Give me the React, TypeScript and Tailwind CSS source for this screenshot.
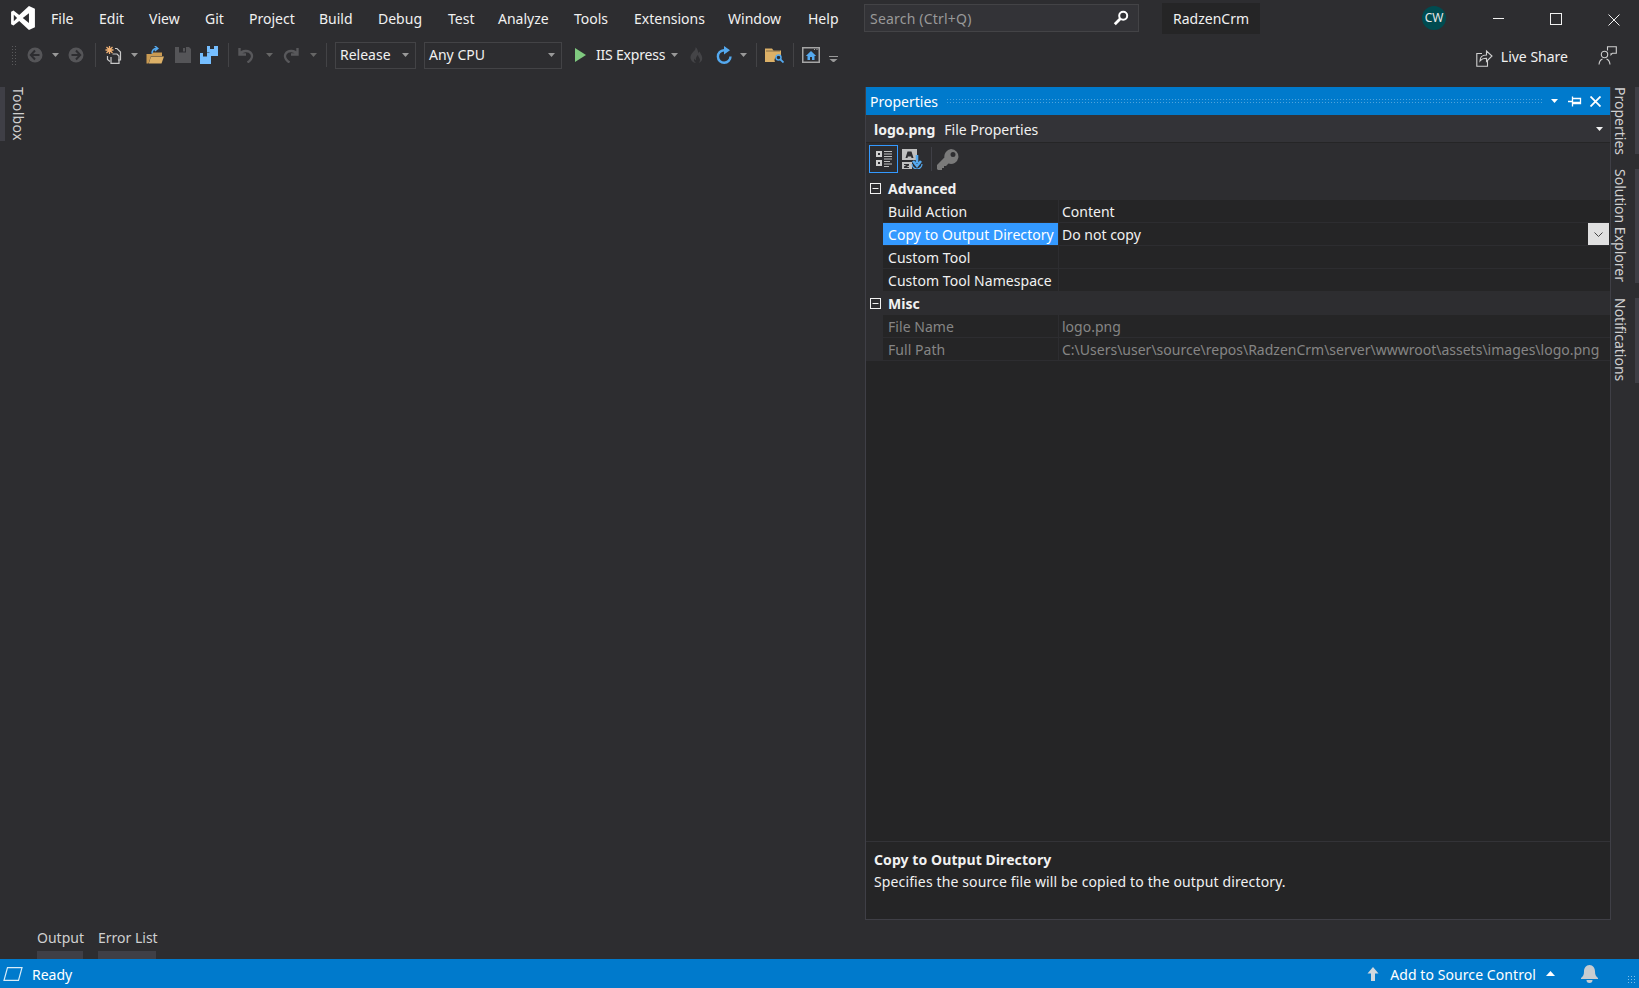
import { ReactNode } from "react";

const MENU = [
  ["File", "w-[48px]"],
  ["Edit", "w-[50px]"],
  ["View", "w-[56px]"],
  ["Git", "w-[44px]"],
  ["Project", "w-[70px]"],
  ["Build", "w-[59px]"],
  ["Debug", "w-[70px]"],
  ["Test", "w-[50px]"],
  ["Analyze", "w-[76px]"],
  ["Tools", "w-[60px]"],
  ["Extensions", "w-[94px]"],
  ["Window", "w-[80px]"],
  ["Help", "w-[41px]"],
];

function Caret({ className = "", color = "#999" }: { className?: string; color?: string }) {
  return (
    <svg width="7" height="4" viewBox="0 0 7 4" className={className}>
      <path d="M0 0h7L3.500 4z" fill={color} />
    </svg>
  );
}

function Sep({ className = "" }: { className?: string }) {
  return <div className={`h-6 w-px bg-[#434346] ${className}`} />;
}

function VsLogo() {
  return (
    <svg width="26" height="26" viewBox="0 0 24 24" className="ml-[10px] shrink-0">
      <path
        fillRule="evenodd"
        fill="#fff"
        d="M17.500 1 23 3.500v17L17.500 23l-9-8.200L3.200 19 1 17.800V6.200L3.200 5l5.300 4.200zm0 6.500L11.800 12l5.700 4.500zM3.500 9v6l3-3z"
      />
    </svg>
  );
}

function CircleArrow({ dir }: { dir: "l" | "r" }) {
  return (
    <svg width="16" height="16" viewBox="0 0 16 16">
      <circle cx="8" cy="8" r="7.500" fill="#555558" />
      <path
        d={dir === "l" ? "M8 3.500 3.800 8 8 12.500M4 8h8.500" : "M8 3.500 12.200 8 8 12.500M12 8H3.500"}
        stroke="#2d2d30"
        strokeWidth="2"
        fill="none"
      />
    </svg>
  );
}

function NewProject() {
  return (
    <svg width="18" height="18" viewBox="0 0 18 18">
      <path d="M10 2.500h2l3.500 3.500v8H13" fill="none" stroke="#c8c8c8" strokeWidth="1.200" />
      <path d="M7.500 8h4.500l2 2v7.400H6V11" fill="none" stroke="#c8c8c8" strokeWidth="1.200" />
      <path d="M2.500 10v3.500l2.500 2" fill="none" stroke="#c8c8c8" strokeWidth="1.200" />
      <path d="M4.500 0v8M.5 4h8M1.500 1l6 6M7.500 1l-6 6" stroke="#f0b072" strokeWidth="1.300" />
    </svg>
  );
}

function OpenFolder() {
  return (
    <svg width="18" height="18" viewBox="0 0 18 18">
      <path d="M.5 8h5l1-1.500h9.500V10H5l-2.500 7.500H.5z" fill="#c99a52" />
      <path d="M2.800 17.500 5 10.500h13L15.500 17.500z" fill="#dcb067" />
      <path d="M6 7.500c0-3 2-5 5-5M8.800 0l3 2.500-3 2.500" fill="none" stroke="#54a9ef" strokeWidth="1.500" />
    </svg>
  );
}

function Floppy() {
  return (
    <svg width="16" height="16" viewBox="0 0 16 16">
      <path d="M0 0h14l2 2v14H0z" fill="#555558" />
      <path d="M4 0h7v5.500H4z" fill="#2d2d30" />
      <path d="M8 1h2v3.500H8z" fill="#555558" />
    </svg>
  );
}

function SaveAll() {
  return (
    <svg width="18" height="18" viewBox="0 0 18 18">
      <path d="M7 0h11v10H9.500V6.500H7z" fill="#75beff" />
      <path d="M10 0h4v3h-4z" fill="#2d2d30" />
      <path d="M0 7h11v11H0z" fill="#75beff" />
      <path d="M3 7h4v3.500H3z" fill="#2d2d30" />
    </svg>
  );
}

function UndoIcon({ flip }: { flip?: boolean }) {
  return (
    <svg width="16" height="16" viewBox="0 0 16 16" className={flip ? "-scale-x-100" : ""}>
      <path
        d="M1.500 1v6.500H8M2 7c2-3.500 9-4.500 11.500 0 1.500 3-.8 6.500-4 8.500"
        fill="none"
        stroke="#58585b"
        strokeWidth="2.400"
      />
    </svg>
  );
}

function Flame() {
  return (
    <svg width="13" height="16" viewBox="0 0 13 16">
      <path
        d="M5.500 0c.6 2.500-1.500 4-3 5.800C.7 8-.5 10.500 1.500 13.500 2.500 15 4 16 6 16c-1.500-1-2.500-2.500-1.800-4.500.4 1 1 1.600 1.800 1.800-.5-2 .4-4 2-5.300 0 2 2 3 2 5 0 1.400-.7 2.300-1.500 3 2.500-.5 4-2.700 3.700-5.300C12 7.500 10 6.500 9.500 4.500 8.800 5 8.500 6 8.500 6.500 8 4 7.500 1.500 5.500 0z"
        fill="#444447"
      />
    </svg>
  );
}

function Refresh() {
  return (
    <svg width="17" height="18" viewBox="0 0 17 18">
      <path d="M8 4.200A6.300 6.300 0 1 0 14.500 10.500" fill="none" stroke="#54a9ef" strokeWidth="2.400" />
      <path d="M8 0v8.400l6-4.200z" fill="#54a9ef" />
    </svg>
  );
}

function FolderSearch() {
  return (
    <svg width="19" height="16" viewBox="0 0 19 16">
      <path d="M0 1.500h7l1.500 2H16V9a4.500 4.500 0 0 0-6 6H0z" fill="#dcb067" />
      <path d="M1 4h14" stroke="#2d2d30" strokeWidth="1" opacity=".5" />
      <circle cx="13.500" cy="10.500" r="2.500" fill="none" stroke="#54a9ef" strokeWidth="1.500" />
      <path d="m15.500 12.500 3 3" stroke="#54a9ef" strokeWidth="1.800" />
    </svg>
  );
}

function HomeWindow() {
  return (
    <svg width="18" height="16" viewBox="0 0 18 16">
      <rect x=".75" y=".75" width="16.500" height="14.500" fill="none" stroke="#a5a5a5" strokeWidth="1.500" />
      <path d="M12 2.500h1M14.500 2.500h1" stroke="#a5a5a5" strokeWidth="1" />
      <path d="M9 4 3.800 9H5.500v4h2.500v-3h2v3h2.500V9h1.700z" fill="#54a9ef" />
    </svg>
  );
}

function Magnifier() {
  return (
    <svg width="16" height="16" viewBox="0 0 16 16">
      <circle cx="10.200" cy="5.800" r="4" fill="none" stroke="#fff" strokeWidth="2" />
      <path d="M7.500 8.500 1.800 14.200" stroke="#fff" strokeWidth="2.800" />
    </svg>
  );
}

function ShareIcon() {
  return (
    <svg width="17" height="19" viewBox="0 0 17 19" fill="none" stroke="#d0d0d0" strokeWidth="1.100">
      <path d="M6 5.500H.8v12.700h10.700V12" />
      <path d="M4 13c0-4 2.500-6 6.500-6V3l5.500 5-5.500 5.500v-3.200C7.500 10.300 5.500 11 4 13z" />
    </svg>
  );
}

function FeedbackIcon() {
  return (
    <svg width="19" height="19" viewBox="0 0 19 19" fill="none" stroke="#d0d0d0" strokeWidth="1.100">
      <path d="M9.500 4.500V.8h8.800v6.400H14.500l-1.500 1.500V7.200" />
      <circle cx="6.500" cy="8.500" r="3.200" />
      <path d="M1 18.500c.3-3 2-5 3.500-5.500M12 18.500c-.3-3-2-5-3.500-5.500" />
    </svg>
  );
}

function CategorizedIcon() {
  return (
    <svg width="18" height="18" viewBox="0 0 18 18">
      <path d="M1 1h6v6H1zM1 10h6v6H1z" fill="#d0d0d0" />
      <path d="M3 3h2v2H3zM3 12h2v2H3z" fill="#2d2d30" />
      <path d="M9 1.500h8M9 4h8M9 6.500h8M9 9h8M9 11.500h6M9 14h8M9 16.500h5" stroke="#c0c0c0" strokeWidth="1" />
    </svg>
  );
}

function AlphabeticalIcon() {
  return (
    <svg width="21" height="20" viewBox="0 0 21 20">
      <path d="M0 0h15v11H0zM0 13h10v7H0z" fill="#c0c0c0" />
      <path d="M5.500 2.500h4L11.500 9h-2l-.4-1.500H5.900L5.500 9h-2zM2 15h5v1.500L4.500 18H7v1H2v-1.500L4.500 16H2z" fill="#2d2d30" />
      <path d="M15 6v8M11 12l4 5 4-5" fill="none" stroke="#54a9ef" strokeWidth="2.600" />
      <path d="M10 15a5 5 0 0 0 10 0" fill="none" stroke="#54a9ef" strokeWidth="1.200" />
    </svg>
  );
}

function KeyIcon() {
  return (
    <svg width="22" height="21" viewBox="0 0 22 21">
      <path
        fillRule="evenodd"
        d="M14 0a7.500 7.500 0 1 1-2.500 14.600L9 17H7v2H5v2H1l-1-1v-4l7.400-7.400A7.500 7.500 0 0 1 14 0zm2 3a2.500 2.500 0 1 0 0 5 2.500 2.500 0 0 0 0-5z"
        fill="#7a7a7a"
      />
    </svg>
  );
}

function PinIcon() {
  return (
    <svg width="14" height="11" viewBox="0 0 14 11" fill="none" stroke="#fff">
      <path d="M0 5.500h4.500M4.500 .5v10" strokeWidth="1.300" />
      <path d="M4.500 2.500h8v5h-8" strokeWidth="1.300" />
      <path d="M5 6.500h8" strokeWidth="1.500" />
    </svg>
  );
}

function Toggle() {
  return (
    <svg width="11" height="11" viewBox="0 0 11 11" className="shrink-0">
      <rect x=".5" y=".5" width="10" height="10" fill="none" stroke="#f1f1f1" />
      <path d="M2.500 5.500h6" stroke="#f1f1f1" />
    </svg>
  );
}

function Combo({ label, width }: { label: string; width: string }) {
  return (
    <div className={`flex h-[27px] items-center justify-between border border-[#434346] pl-[4px] pr-[6px] text-[#f1f1f1] ${width}`}>
      <span>{label}</span>
      <Caret />
    </div>
  );
}

function Section({ title }: { title: string }) {
  return (
    <div className="flex h-[23px] items-center bg-[#2d2d30] pl-[4px]">
      <Toggle />
      <span className="ml-[7px] font-bold text-[#f1f1f1]">{title}</span>
    </div>
  );
}

function Row({
  label,
  value,
  selected,
  muted,
  children,
}: {
  label: string;
  value?: string;
  selected?: boolean;
  muted?: boolean;
  children?: ReactNode;
}) {
  const text = muted ? "text-[#858585]" : "text-[#f1f1f1]";
  return (
    <div className="flex h-[23px] bg-[#2d2d30]">
      <div className="w-[17px] shrink-0" />
      <div className="flex flex-1 border-b border-[#2d2d30] bg-[#252526]">
        <div className={`w-[175px] shrink-0 truncate pl-[5px] leading-[24px] tracking-[0.05px] ${selected ? "bg-[#3399ff] text-white" : text}`}>
          {label}
        </div>
        <div className={`flex flex-1 justify-between border-l border-[#2d2d30] pl-[3px] leading-[24px] ${text}`}>
          <span>{value}</span>
          {children}
        </div>
      </div>
    </div>
  );
}

function RailTab({ label, height }: { label: string; height: string }) {
  return (
    <div className={`flex justify-between ${height}`}>
      <span className="[writing-mode:vertical-rl] text-[#d0d0d0]">{label}</span>
      <div className="w-[4px] bg-[#3f3f46]" />
    </div>
  );
}

function BottomTab({ label, width }: { label: string; width: string }) {
  return (
    <div className={`flex flex-col ${width}`}>
      <span className="h-[21px] whitespace-nowrap leading-[16px] text-[#d0d0d0]">{label}</span>
      <div className="h-[8px] bg-[#3f3f46]" />
    </div>
  );
}

export default function App() {
  return (
    <div className="flex h-[988px] w-[1639px] flex-col overflow-hidden bg-[#2d2d30] font-['Noto_Sans',sans-serif] text-[14px] leading-[18px] text-[#f1f1f1]">
      {/* title bar */}
      <div className="flex h-[39px] shrink-0 items-start">
        <div className="mt-[5px]">
          <VsLogo />
        </div>
        <div className="ml-[15px] mt-[10px] flex">
          {MENU.map(([name, w]) => (
            <span key={name} className={w}>
              {name}
            </span>
          ))}
        </div>
        <div className="ml-[15px] mt-[4px] flex h-[28px] w-[275px] items-center justify-between border border-[#434346] bg-[#333337] pl-[5px] pr-[9px] text-[#999]">
          <span className="pt-px tracking-[0.2px]">Search (Ctrl+Q)</span>
          <Magnifier />
        </div>
        <div className="ml-[23px] mt-[3px] flex h-[31px] w-[98px] items-center justify-center bg-[#252526] pt-px">RadzenCrm</div>
        <div className="ml-[162px] mt-[6px] flex h-[24px] w-[24px] items-center justify-center rounded-full bg-[#004b50] text-[12px] text-[#e8e8e8]">
          CW
        </div>
        <div className="ml-[47px] mt-[18px] h-px w-[11px] bg-[#f1f1f1]" />
        <div className="ml-[46px] mt-[13px] h-[12px] w-[12px] border border-[#f1f1f1]" />
        <svg width="12" height="12" viewBox="0 0 12 12" className="ml-[46px] mt-[14px]">
          <path d="M.5.500l11 11M11.500.500l-11 11" stroke="#f1f1f1" />
        </svg>
      </div>

      {/* toolbar */}
      <div className="flex h-[32px] shrink-0 items-center">
        <div className="ml-[11px] h-[21px] w-[6px] bg-[radial-gradient(#5a5a5c_1px,transparent_1px)] bg-[length:3px_3px]" />
        <div className="ml-[10px]">
          <CircleArrow dir="l" />
        </div>
        <Caret className="ml-[9px]" />
        <div className="ml-[9px]">
          <CircleArrow dir="r" />
        </div>
        <Sep className="ml-[11px]" />
        <div className="ml-[9px]">
          <NewProject />
        </div>
        <Caret className="ml-[8px]" />
        <div className="ml-[8px]">
          <OpenFolder />
        </div>
        <div className="ml-[11px]">
          <Floppy />
        </div>
        <div className="ml-[9px]">
          <SaveAll />
        </div>
        <Sep className="ml-[10px]" />
        <div className="ml-[9px]">
          <UndoIcon />
        </div>
        <Caret className="ml-[12px]" color="#666" />
        <div className="ml-[10px]">
          <UndoIcon flip />
        </div>
        <Caret className="ml-[11px]" color="#666" />
        <Sep className="ml-[9px]" />
        <div className="ml-[8px]">
          <Combo label="Release" width="w-[81px]" />
        </div>
        <div className="ml-[8px]">
          <Combo label="Any CPU" width="w-[138px]" />
        </div>
        <svg width="11" height="14" viewBox="0 0 11 14" className="ml-[13px]">
          <path d="M0 0l11 7-11 7z" fill="#7fc97f" />
        </svg>
        <span className="ml-[10px] w-[69px] whitespace-nowrap tracking-[-0.2px]">IIS Express</span>
        <Caret className="ml-[6px]" />
        <div className="ml-[12px]">
          <Flame />
        </div>
        <div className="ml-[13px]">
          <Refresh />
        </div>
        <Caret className="ml-[7px]" />
        <Sep className="ml-[9px]" />
        <div className="ml-[8px]">
          <FolderSearch />
        </div>
        <Sep className="ml-[9px]" />
        <div className="ml-[8px]">
          <HomeWindow />
        </div>
        <svg width="9" height="6" viewBox="0 0 9 6" className="ml-[9px] mt-[8px]">
          <path d="M0 0h9v1H0zM.5 3h8L4.500 6.500z" fill="#999" />
        </svg>
        <div className="ml-auto flex items-center">
          <div className="mt-[4px] flex items-center">
            <ShareIcon />
            <span className="ml-[8px]">Live Share</span>
          </div>
          <div className="ml-[30px] mr-[22px]">
            <FeedbackIcon />
          </div>
        </div>
      </div>

      {/* workspace */}
      <div className="flex min-h-0 flex-1 pt-[16px]">
        <div className="flex min-w-0 flex-1 flex-col justify-between">
          <div className="flex h-[54px]">
            <div className="w-[5px] bg-[#3f3f46]" />
            <span className="ml-[4px] [writing-mode:vertical-rl] tracking-[0.3px] text-[#d0d0d0]">Toolbox</span>
          </div>
          <div className="ml-[37px] flex gap-[15px]">
            <BottomTab label="Output" width="w-[46px]" />
            <BottomTab label="Error List" width="w-[58px]" />
          </div>
        </div>

        {/* properties panel */}
        <div className="mb-[39px] flex w-[746px] shrink-0 flex-col border-x border-b border-[#3f3f46] bg-[#252526]">
          <div className="flex h-[28px] shrink-0 items-center bg-[#007acc] pl-[4px] pr-[9px] text-white">
            <span className="pt-px">Properties</span>
            <div className="ml-[8px] h-[6px] flex-1 bg-[radial-gradient(#4da3dc_1px,transparent_1px)] bg-[length:3px_3px]" />
            <Caret className="ml-[9px]" color="#fff" />
            <div className="ml-[10px]">
              <PinIcon />
            </div>
            <svg width="11" height="11" viewBox="0 0 11 11" className="ml-[8px]">
              <path d="M.5.500l10 10M10.500.500l-10 10" stroke="#fff" strokeWidth="1.800" />
            </svg>
          </div>
          <div className="flex h-[28px] shrink-0 items-center border-b border-[#252526] bg-[#333337] pl-[8px] pr-[7px]">
            <span className="pt-[3px] font-bold">logo.png</span>
            <span className="ml-[9px] pt-[3px]">File Properties</span>
            <Caret className="ml-auto" color="#f1f1f1" />
          </div>
          <div className="flex h-[34px] shrink-0 items-center bg-[#2d2d30] pb-[2px] pl-[3px]">
            <div className="flex h-[28px] w-[29px] items-center justify-center border border-[#3399ff]">
              <CategorizedIcon />
            </div>
            <div className="ml-[4px]">
              <AlphabeticalIcon />
            </div>
            <div className="ml-[8px] h-[24px] w-px bg-[#3f3f46]" />
            <div className="ml-[5px]">
              <KeyIcon />
            </div>
          </div>
          <Section title="Advanced" />
          <Row label="Build Action" value="Content" />
          <Row label="Copy to Output Directory" value="Do not copy" selected>
            <div className="mr-px flex h-[22px] w-[21px] items-center justify-center bg-[#e0e0e0]">
              <svg width="9" height="5" viewBox="0 0 9 5">
                <path d="M.5.500l4 4 4-4" fill="none" stroke="#444" />
              </svg>
            </div>
          </Row>
          <Row label="Custom Tool" />
          <Row label="Custom Tool Namespace" />
          <Section title="Misc" />
          <Row label="File Name" value="logo.png" muted />
          <Row label="Full Path" value="C:\Users\user\source\repos\RadzenCrm\server\wwwroot\assets\images\logo.png" muted />
          <div className="flex-1 border-b border-[#333337]" />
          <div className="h-[77px] shrink-0 pl-[8px] pt-[9px]">
            <div className="font-bold tracking-[0.08px]">Copy to Output Directory</div>
            <div className="mt-[4px] tracking-[0.13px]">Specifies the source file will be copied to the output directory.</div>
          </div>
        </div>

        {/* right rail */}
        <div className="flex w-[28px] shrink-0 flex-col gap-[15px]">
          <RailTab label="Properties" height="h-[67px]" />
          <RailTab label="Solution Explorer" height="h-[114px]" />
          <RailTab label="Notifications" height="h-[85px]" />
        </div>
      </div>

      {/* status bar */}
      <div className="flex h-[29px] shrink-0 items-center bg-[#007acc] text-white">
        <svg width="20" height="14" viewBox="0 0 20 14" className="ml-[3px]">
          <path d="M4.500.700h14.500l-3.500 12.600H1z" fill="none" stroke="#d8ecf8" strokeWidth="1.200" />
        </svg>
        <span className="ml-[9px] pt-[3px]">Ready</span>
        <svg width="12" height="14" viewBox="0 0 12 14" className="ml-auto">
          <path d="M6 0l5.500 6.500H8V14H4V6.500H.5z" fill="#d0d8de" />
        </svg>
        <span className="ml-[11px] pt-[3px] tracking-[0.08px]">Add to Source Control</span>
        <svg width="9" height="5" viewBox="0 0 9 5" className="ml-[10px]">
          <path d="M0 5h9L4.500 0z" fill="#fff" />
        </svg>
        <svg width="17" height="18" viewBox="0 0 17 18" className="ml-[26px]">
          <path d="M8.500 0C5 0 3 3 3 6.500c0 3.500-1 5-3 6.500v1h17v-1c-2-1.500-3-3-3-6.500C14 3 12 0 8.500 0z" fill="#c8ccd0" />
          <path d="M5.500 15h6a3 3 0 0 1-6 0z" fill="#c8ccd0" />
        </svg>
        <div className="ml-[29px] mr-[2px] mt-[12px] h-[9px] w-[10px] bg-[radial-gradient(#7fbfe8_1px,transparent_1px)] bg-[length:3px_3px]" />
      </div>
    </div>
  );
}
